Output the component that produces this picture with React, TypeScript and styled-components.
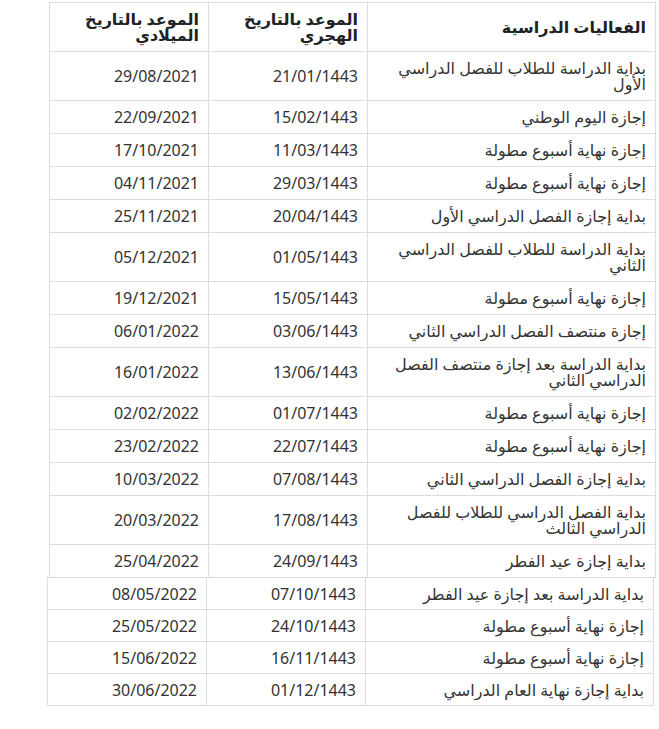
import React from "react";
import styled, { createGlobalStyle } from "styled-components";

const GlobalStyle = createGlobalStyle`
  html, body {
    margin: 0;
    padding: 0;
    background: #ffffff;
  }
  body {
    font-family: "Noto Sans", "DejaVu Sans", sans-serif;
    color: #333333;
  }
`;

const Page = styled.div`
  display: flex;
  flex-direction: column;
  align-items: flex-start;
  padding-top: 2px;
`;

const Table = styled.table<{ $left: number; $width: number; $overlap?: boolean }>`
  direction: rtl;
  border-collapse: collapse;
  table-layout: fixed;
  margin-left: ${(p) => p.$left}px;
  margin-top: ${(p) => (p.$overlap ? "-1px" : "0")};
  width: ${(p) => p.$width}px;
  font-size: 16px;
  line-height: 16px;
`;

const HeadCell = styled.th`
  border: 1px solid #dddddd;
  padding: 8px 9px;
  text-align: right;
  vertical-align: middle;
  font-weight: 700;
  color: #222222;
  height: 32px;
`;

const Cell = styled.td<{ $compact?: boolean }>`
  border: 1px solid #dddddd;
  padding: ${(p) => (p.$compact ? "7.5px 9px 7.5px" : "8px 9px")};
  text-align: right;
  vertical-align: middle;
  color: #333333;
`;

type Row = [string, string, string];

const firstRows: Row[] = [
  ["بداية الدراسة للطلاب للفصل الدراسي الأول", "21/01/1443", "29/08/2021"],
  ["إجازة اليوم الوطني", "15/02/1443", "22/09/2021"],
  ["إجازة نهاية أسبوع مطولة", "11/03/1443", "17/10/2021"],
  ["إجازة نهاية أسبوع مطولة", "29/03/1443", "04/11/2021"],
  ["بداية إجازة الفصل الدراسي الأول", "20/04/1443", "25/11/2021"],
  ["بداية الدراسة للطلاب للفصل الدراسي الثاني", "01/05/1443", "05/12/2021"],
  ["إجازة نهاية أسبوع مطولة", "15/05/1443", "19/12/2021"],
  ["إجازة منتصف الفصل الدراسي الثاني", "03/06/1443", "06/01/2022"],
  ["بداية الدراسة بعد إجازة منتصف الفصل الدراسي الثاني", "13/06/1443", "16/01/2022"],
  ["إجازة نهاية أسبوع مطولة", "01/07/1443", "02/02/2022"],
  ["إجازة نهاية أسبوع مطولة", "22/07/1443", "23/02/2022"],
  ["بداية إجازة الفصل الدراسي الثاني", "07/08/1443", "10/03/2022"],
  ["بداية الفصل الدراسي للطلاب للفصل الدراسي الثالث", "17/08/1443", "20/03/2022"],
  ["بداية إجازة عيد الفطر", "24/09/1443", "25/04/2022"],
];

const secondRows: Row[] = [
  ["بداية الدراسة بعد إجازة عيد الفطر", "07/10/1443", "08/05/2022"],
  ["إجازة نهاية أسبوع مطولة", "24/10/1443", "25/05/2022"],
  ["إجازة نهاية أسبوع مطولة", "16/11/1443", "15/06/2022"],
  ["بداية إجازة نهاية العام الدراسي", "01/12/1443", "30/06/2022"],
];

const Cols = () => (
  <colgroup>
    <col style={{ width: 288 }} />
    <col style={{ width: 159 }} />
    <col style={{ width: 159 }} />
  </colgroup>
);

const Body = ({ rows, compact }: { rows: Row[]; compact?: boolean }) => (
  <tbody>
    {rows.map((r, i) => (
      <tr key={i}>
        <Cell $compact={compact}>{r[0]}</Cell>
        <Cell $compact={compact}>{r[1]}</Cell>
        <Cell $compact={compact}>{r[2]}</Cell>
      </tr>
    ))}
  </tbody>
);

export default function App() {
  return (
    <Page>
      <GlobalStyle />
      <Table $left={49} $width={607}>
        <Cols />
        <thead>
          <tr>
            <HeadCell>الفعاليات الدراسية</HeadCell>
            <HeadCell>الموعد بالتاريخ الهجري</HeadCell>
            <HeadCell>الموعد بالتاريخ الميلادي</HeadCell>
          </tr>
        </thead>
        <Body rows={firstRows} />
      </Table>
      <Table $left={47} $width={606} $overlap>
        <Cols />
        <Body rows={secondRows} compact />
      </Table>
    </Page>
  );
}
